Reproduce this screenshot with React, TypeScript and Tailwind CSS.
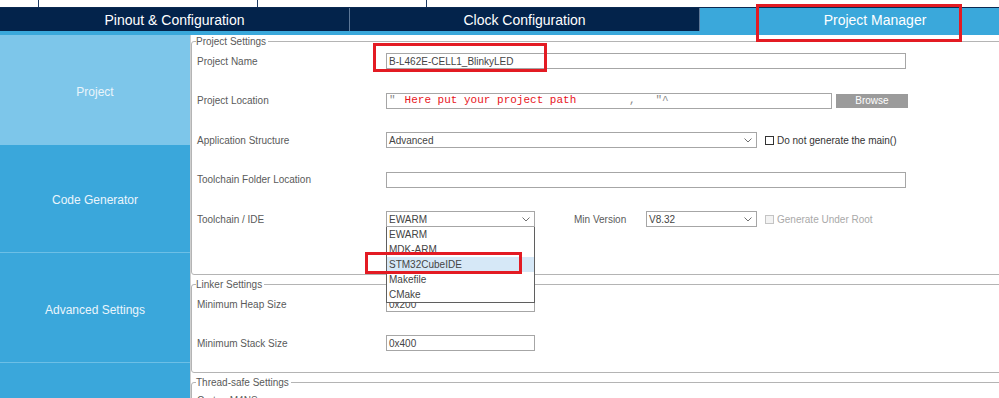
import { ReactNode } from "react";

const Chevron = () => (
  <svg width="8" height="5" viewBox="0 0 8 5" className="shrink-0">
    <polyline points="0.5,0.5 4,4 7.5,0.5" fill="none" stroke="#707070" strokeWidth="1" />
  </svg>
);

const Label = ({ children }: { children: ReactNode }) => (
  <div className="w-[189px] shrink-0 text-[10px] text-[#5a5a5a]">{children}</div>
);

const Input = ({ width, children }: { width: string; children?: ReactNode }) => (
  <div className={`${width} h-[16px] shrink-0 border border-[#a6a6a6] bg-white px-[2px] flex items-center text-[10px] text-[#444] whitespace-pre overflow-hidden`}>
    {children}
  </div>
);

const Select = ({ width, value }: { width: string; value: string }) => (
  <div className={`${width} h-[16px] border border-[#a6a6a6] bg-white pl-[2px] pr-[4px] flex items-center justify-between text-[10px] text-[#444]`}>
    <span>{value}</span>
    <Chevron />
  </div>
);

const Check = ({ label, disabled }: { label: string; disabled?: boolean }) => (
  <div className="ml-[8px] flex items-center gap-[3px]">
    <div
      className={
        disabled
          ? "w-[9px] h-[9px] border border-[#c4c4c4] bg-[#f3f3f3]"
          : "w-[9px] h-[9px] border border-[#333] bg-white"
      }
    />
    <span className={disabled ? "text-[10px] text-[#a9a9a9]" : "text-[10px] text-[#333]"}>{label}</span>
  </div>
);

const Legend = ({ children }: { children: ReactNode }) => (
  <legend className="-ml-[1px] pr-[2px] text-[10px] leading-[13px] text-[#5a5a5a]">{children}</legend>
);

const toolchains = ["EWARM", "MDK-ARM", "STM32CubeIDE", "Makefile", "CMake"];

export default function App() {
  return (
    <div className="relative w-[999px] h-[398px] overflow-hidden bg-white font-['Liberation_Sans',Arial,sans-serif]">
      {/* strip of the toolbar above */}
      <div className="flex h-[8px] border-b border-[#0b2a52]">
        <div className="w-[39px] border-r border-[#1c3a63]" />
        <div className="w-[219px] border-r border-[#1c3a63]" />
        <div className="w-[169px] border-r border-[#1c3a63]" />
      </div>

      {/* tabs */}
      <div className="flex h-[23px] bg-[#03234b]">
        <div className="w-[350px] shrink-0 border-r border-[#5d7797] pt-[2px] flex items-center justify-center text-[14px] text-white">
          Pinout &amp; Configuration
        </div>
        <div className="w-[350px] shrink-0 border-r border-[#5d7797] pt-[2px] flex items-center justify-center text-[14px] text-white">
          Clock Configuration
        </div>
        <div className="w-[350px] shrink-0 bg-[#3aa8db] pt-[2px] flex items-center justify-center text-[14px] text-white">
          Project Manager
        </div>
      </div>
      <div className="h-[4px] bg-[#3aa8db]" />

      <div className="flex h-[363px]">
        {/* sidebar */}
        <div className="w-[190px] shrink-0 flex flex-col text-[12px] text-[#eaf5fb]">
          <div className="h-[110px] pt-[3px] bg-[#7dc6ea] flex items-center justify-center">Project</div>
          <div className="h-[108px] pt-[3px] bg-[#3aa7db] border-b border-[#6cbfe6] flex items-center justify-center">
            Code Generator
          </div>
          <div className="h-[110px] pt-[4px] bg-[#3aa7db] border-b border-[#6cbfe6] flex items-center justify-center">
            Advanced Settings
          </div>
          <div className="flex-1 bg-[#3aa7db]" />
        </div>

        {/* settings */}
        <div className="flex-1 border-l border-[#cfcfcf] overflow-hidden">
          <fieldset className="w-[850px] border border-[#b4b4b4] rounded-[3px] pl-[5px]">
            <Legend>Project Settings</Legend>
            <div className="flex flex-col gap-[23.5px] pt-[5px] pb-[47px]">
              <div className="flex items-center h-[16px]">
                <Label>Project Name</Label>
                <Input width="w-[520px]">B-L462E-CELL1_BlinkyLED</Input>
              </div>
              <div className="flex items-center h-[16px]">
                <Label>Project Location</Label>
                <Input width="w-[446px]">
                  <span className="font-['Liberation_Mono',monospace] text-[11px]">
                    <span className="text-[#888]">"</span>
                    <span className="ml-[9px] text-[#e8141c]">Here put your project path</span>
                    <span className="text-[#888]">        ,   "^</span>
                  </span>
                </Input>
                <div className="ml-[4px] w-[72px] h-[14px] bg-[#9b9b9b] flex items-center justify-center text-[10px] text-white">
                  Browse
                </div>
              </div>
              <div className="flex items-center h-[16px]">
                <Label>Application Structure</Label>
                <Select width="w-[371px]" value="Advanced" />
                <Check label="Do not generate the main()" />
              </div>
              <div className="flex items-center h-[16px]">
                <Label>Toolchain Folder Location</Label>
                <Input width="w-[520px]" />
              </div>
              <div className="flex items-center h-[16px]">
                <Label>Toolchain / IDE</Label>
                <div className="relative w-[149px]">
                  <Select width="w-[149px]" value="EWARM" />
                  <div className="absolute left-0 top-full z-10 w-[149px] bg-white border border-t-0 border-[#5f5f5f] text-[10px] text-[#444]">
                    {toolchains.map((t) => (
                      <div
                        key={t}
                        className={
                          t === "STM32CubeIDE"
                            ? "h-[15px] pl-[2px] flex items-center bg-[#d6e8f7]"
                            : "h-[15px] pl-[2px] flex items-center"
                        }
                      >
                        {t}
                      </div>
                    ))}
                  </div>
                </div>
                <div className="ml-[39px] w-[72px] text-[10px] text-[#5a5a5a]">Min Version</div>
                <Select width="w-[111px]" value="V8.32" />
                <Check label="Generate Under Root" disabled />
              </div>
            </div>
          </fieldset>

          <fieldset className="mt-[3px] w-[850px] border border-[#b4b4b4] rounded-[3px] pl-[5px]">
            <Legend>Linker Settings</Legend>
            <div className="flex flex-col gap-[23px] pt-[5px] pb-[21px]">
              <div className="flex items-center h-[16px]">
                <Label>Minimum Heap Size</Label>
                <Input width="w-[149px]">0x200</Input>
              </div>
              <div className="flex items-center h-[16px]">
                <Label>Minimum Stack Size</Label>
                <Input width="w-[149px]">0x400</Input>
              </div>
            </div>
          </fieldset>

          <fieldset className="mt-[3px] w-[850px] border border-[#b4b4b4] rounded-[3px] pl-[5px]">
            <Legend>Thread-safe Settings</Legend>
            <div className="pt-[3px] pb-[20px]">
              <div className="flex items-center h-[16px]">
                <Label>Cortex-M4NS</Label>
              </div>
            </div>
          </fieldset>
        </div>
      </div>

      {/* red annotation frames */}
      <div className="absolute z-20 left-[756px] top-[4px] w-[206px] h-[38px] border-[3px] border-[#e31b23]" />
      <div className="absolute z-20 left-[373px] top-[43px] w-[174px] h-[29px] border-[3px] border-[#e31b23]" />
      <div className="absolute z-20 left-[365px] top-[252px] w-[157px] h-[22px] border-[3px] border-[#e31b23]" />
    </div>
  );
}
